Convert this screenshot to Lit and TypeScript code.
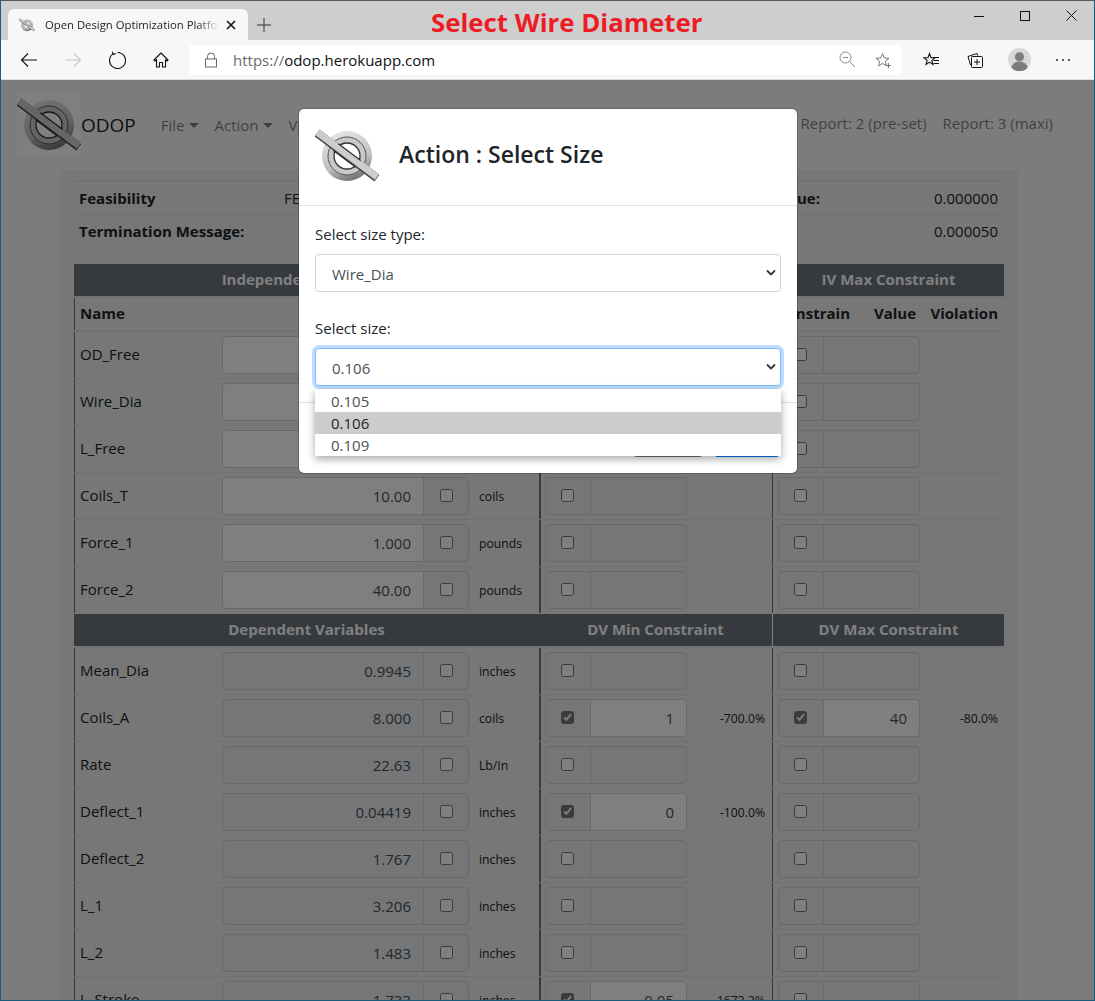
import { LitElement, html, css, svg, unsafeCSS } from "lit";
import { customElement } from "lit/decorators.js";

const FONT_STACK = unsafeCSS(`"Open Sans", "Noto Sans", sans-serif`);

interface Row {
  name: string;
  value?: string;
  unit?: string;
  min?: string;
  minViolation?: string;
  max?: string;
  maxViolation?: string;
}

const independent: Row[] = [
  { name: "OD_Free" },
  { name: "Wire_Dia" },
  { name: "L_Free" },
  { name: "Coils_T", value: "10.00", unit: "coils" },
  { name: "Force_1", value: "1.000", unit: "pounds" },
  { name: "Force_2", value: "40.00", unit: "pounds" },
];

const dependent: Row[] = [
  { name: "Mean_Dia", value: "0.9945", unit: "inches" },
  { name: "Coils_A", value: "8.000", unit: "coils", min: "1", minViolation: "-700.0%", max: "40", maxViolation: "-80.0%" },
  { name: "Rate", value: "22.63", unit: "Lb/In" },
  { name: "Deflect_1", value: "0.04419", unit: "inches", min: "0", minViolation: "-100.0%" },
  { name: "Deflect_2", value: "1.767", unit: "inches" },
  { name: "L_1", value: "3.206", unit: "inches" },
  { name: "L_2", value: "1.483", unit: "inches" },
  { name: "L_Stroke", value: "1.733", unit: "inches", min: "0.05", minViolation: "1673.3%" },
];

// the ODOP mark: ringed disc crossed by a long diagonal bar
const logo = (size: number) => html`
  <svg width=${size} height=${size} viewBox="0 0 64 64" aria-hidden="true">
    <defs>
      <linearGradient id="ring" x1="0.25" y1="0" x2="0.6" y2="1">
        <stop offset="0" stop-color="#e6e6e6" />
        <stop offset="0.65" stop-color="#c0c0c0" />
        <stop offset="1" stop-color="#707070" />
      </linearGradient>
    </defs>
    ${svg`
      <circle cx="32" cy="32" r="25" fill="url(#ring)" />
      <circle cx="32" cy="32" r="19" fill="#c8c8c8" stroke="#555" stroke-width="1" />
      <circle cx="32" cy="32" r="13" fill="#fff" stroke="#333" stroke-width="1.3" />
      <path d="M2 9 L62 54" stroke="#4a4a4a" stroke-width="8.5" />
      <path d="M2.600 8.400 L62 52.900" stroke="#cdcdcd" stroke-width="7" />
      <path d="M18.300 26.500 L40.700 43.300 M23.300 19.700 L45.700 36.500" stroke="#2c2c2c" stroke-width="1.1" />
    `}
  </svg>
`;

const chevron = html`
  <svg class="chevron" width="16" height="12" viewBox="0 0 16 12" aria-hidden="true">
    <path d="M4.500 4 8 7.500 11.500 4" fill="none" stroke="#343a40" stroke-width="1.800" stroke-linecap="round" stroke-linejoin="round" />
  </svg>
`;

@customElement("app-root")
export class AppRoot extends LitElement {
  static styles = css`
    :host {
      display: block;
    }

    * {
      box-sizing: border-box;
    }

    .window {
      display: flex;
      flex-direction: column;
      height: 1001px;
      overflow: hidden;
      background: #fff;
      border: 1px solid #1b5c78;
      border-top-color: #4d5a60;
      font-family: ${FONT_STACK};
      font-size: 15px;
      color: #212529;
    }

    /* browser chrome */
    .titlebar {
      display: flex;
      flex: none;
      height: 39px;
      background: #cecece;
      padding-left: 7px;
    }

    .tab {
      display: flex;
      align-items: center;
      width: 240px;
      margin-top: 8px;
      padding-left: 11px;
      background: #f7f7f7;
      border-radius: 6px 6px 0 0;
      font-size: 11.3px;
      white-space: nowrap;
    }

    .tab-title {
      width: 174px;
      margin-left: 10px;
      overflow: hidden;
      -webkit-mask-image: linear-gradient(90deg, #000 88%, transparent);
      mask-image: linear-gradient(90deg, #000 88%, transparent);
    }

    .tab-close {
      margin-left: 7px;
      display: flex;
    }

    .new-tab {
      display: flex;
      align-items: center;
      justify-content: center;
      width: 32px;
      padding-top: 9px;
    }

    .caption {
      margin-left: 151px;
      font-size: 25.8px;
      font-weight: 700;
      line-height: 42px;
      color: #ed1c24;
      white-space: nowrap;
    }

    .win-controls {
      display: flex;
      margin-left: auto;
    }

    .win-controls span {
      display: flex;
      align-items: center;
      justify-content: center;
      width: 46px;
      height: 29px;
    }

    .toolbar {
      display: flex;
      flex: none;
      align-items: center;
      height: 40px;
      padding-left: 6px;
      background: #f7f7f7;
      border-bottom: 1px solid #dedede;
    }

    .tool {
      display: flex;
      align-items: center;
      justify-content: center;
      flex: none;
      width: 44px;
      height: 30px;
    }

    .urlbar {
      display: flex;
      align-items: center;
      width: 713px;
      height: 30px;
      margin: 0 7px 0 6px;
      padding-left: 15px;
      background: #fff;
      border-radius: 4px;
      font-size: 15px;
    }

    .url {
      margin-left: 15px;
      color: #111;
    }

    .url span {
      color: #6b6b6b;
    }

    .url-end {
      display: flex;
      align-items: center;
      gap: 20px;
      margin-left: auto;
      padding-right: 11px;
    }

    .avatar {
      display: block;
    }

    /* application page, dimmed by the backdrop */
    .page {
      position: relative;
      flex: 1;
      min-height: 0;
      overflow: hidden;
      background: #f8f9fa;
    }

    .backdrop {
      position: absolute;
      inset: 0;
      background: rgba(0, 0, 0, 0.5);
    }

    .nav {
      display: flex;
      height: 90px;
      padding: 13px 0 0 16px;
    }

    .brand {
      display: flex;
      align-items: center;
      height: 64px;
      font-size: 19px;
      color: rgba(0, 0, 0, 0.9);
    }

    .brand svg {
      display: block;
      background: #fff;
    }

    .nav-links {
      display: flex;
      align-items: center;
      gap: 16px;
      height: 64px;
      margin-left: 25px;
      color: rgba(0, 0, 0, 0.5);
    }

    .caret {
      display: inline-block;
      margin-left: 4px;
      vertical-align: 3px;
      border-top: 5px solid currentColor;
      border-left: 5px solid transparent;
      border-right: 5px solid transparent;
    }

    .nav-right {
      display: flex;
      gap: 16px;
      margin-left: auto;
      padding: 0 41px 0 0;
      height: 60px;
      align-items: center;
      color: rgba(0, 0, 0, 0.5);
    }

    .container {
      width: 959px;
      margin-left: 59px;
      padding: 10px 15px 0 14px;
      background: #eeeeee;
      min-height: 840px;
    }

    .summary {
      border-top: 2px solid #dee2e6;
      margin-bottom: 16px;
    }

    .summary-row {
      display: flex;
      height: 33px;
      align-items: center;
      padding: 0 6px 2px 5px;
    }

    .summary-row + .summary-row {
      border-top: 1px solid #dee2e6;
    }

    .summary-row b:first-child {
      width: 205px;
    }

    .summary-row .right {
      margin-left: auto;
    }

    .summary-row .end {
      width: 178px;
      text-align: right;
    }

    .band {
      display: grid;
      grid-template-columns: 465px 233px 232px;
      height: 32px;
      background: #6c757d;
      color: #fff;
      font-weight: 700;
      line-height: 31px;
      text-align: center;
    }

    .band span:last-child {
      border-left: 1px solid #fff;
    }

    .dv-band {
      margin-top: 1px;
    }

    .grid-row {
      display: grid;
      grid-template-columns: 465px 233px 232px;
    }

    .sec {
      display: flex;
      align-items: center;
      padding: 4px 0;
      border-left: 1px solid #6c757d;
    }

    .sec.main {
      padding-left: 5px;
    }

    .sec.min {
      padding-left: 4px;
      border-left-width: 2px;
    }

    .sec.max {
      padding-left: 5px;
    }

    .heads {
      border-top: 2px solid #dee2e6;
      border-bottom: 2px solid #dee2e6;
      font-weight: 700;
    }

    .heads .sec {
      height: 32px;
      padding: 0 0 2px;
    }

    .heads .cols {
      display: grid;
      grid-template-columns: 77px 66px 82px;
      text-align: right;
      width: 100%;
    }

    .heads .sec.main {
      padding-left: 5px;
    }

    .body-row + .body-row {
      border-top: 1px solid #dee2e6;
    }

    .dv {
      margin-top: 1px;
      border-top: 1px solid #dee2e6;
    }

    .name {
      width: 142px;
      flex: none;
      padding-bottom: 2px;
    }

    .group {
      display: flex;
      flex: none;
      height: 38px;
    }

    .group.value {
      width: 247px;
    }

    .group.limit {
      width: 142px;
    }

    .field {
      flex: 1;
      padding-right: 12px;
      background: #e9ecef;
      border: 1px solid #ced4da;
      color: #495057;
      line-height: 36px;
      text-align: right;
    }

    .field.on {
      background: #fff;
    }

    .value .field {
      border-radius: 4px 0 0 4px;
    }

    .limit .field {
      border-radius: 0 4px 4px 0;
      margin-left: -1px;
    }

    .addon {
      display: flex;
      flex: none;
      align-items: center;
      justify-content: center;
      width: 46px;
      padding-bottom: 2px;
      background: #e9ecef;
      border: 1px solid #ced4da;
    }

    .value .addon {
      margin-left: -1px;
      border-radius: 0 4px 4px 0;
    }

    .limit .addon {
      width: 46px;
      padding-right: 1px;
      border-radius: 4px 0 0 4px;
    }

    .check {
      display: flex;
      align-items: center;
      justify-content: center;
      width: 13px;
      height: 13px;
      background: #fff;
      border: 1px solid #767676;
      border-radius: 2.5px;
    }

    .check.on {
      background: #767676;
    }

    .unit {
      margin-left: 10px;
      font-size: 12.2px;
    }

    .violation {
      flex: 1;
      padding-right: 7px;
      font-size: 12.2px;
      text-align: right;
    }

    .sec.max .violation {
      padding-right: 6px;
    }

    /* modal */
    .modal {
      position: absolute;
      top: 29px;
      left: 298px;
      width: 498px;
      background: #fff;
      border-radius: 5px;
      box-shadow: 0 0 0 1px rgba(0, 0, 0, 0.2);
    }

    .modal-head {
      display: flex;
      align-items: center;
      height: 97px;
      padding: 0 0 2px 16px;
      border-bottom: 1px solid #dee2e6;
    }

    .modal-head svg {
      display: block;
    }

    .modal-head h5 {
      margin: 0 0 2px 20px;
      font-size: 23px;
      font-weight: 600;
      line-height: 1.2;
    }

    .modal-body {
      display: flex;
      flex-direction: column;
      padding: 16px;
      border-bottom: 1px solid #dee2e6;
    }

    label {
      display: block;
      line-height: 24px;
      margin-bottom: 8px;
    }

    .select {
      position: relative;
      display: flex;
      align-items: center;
      justify-content: space-between;
      height: 38px;
      padding: 0 1px 0 16px;
      color: #495057;
      background: #fff;
      border: 1px solid #ced4da;
      border-radius: 4px;
      margin-bottom: 24px;
    }

    .select:last-child {
      margin-bottom: 0;
    }

    .select-text {
      padding-top: 2px;
    }

    .select.focus {
      border-color: #80bdff;
      box-shadow: 0 0 0 3px rgba(0, 123, 255, 0.25);
    }

    .options {
      position: absolute;
      top: 40px;
      left: -1px;
      right: -1px;
      z-index: 1;
      height: 67px;
      padding-top: 1px;
      overflow: hidden;
      background: #fff;
      box-shadow: 0 3px 8px rgba(0, 0, 0, 0.35);
      line-height: 22px;
    }

    .options div {
      height: 22px;
      padding-left: 16px;
    }

    .options .sel {
      background: #cccccc;
      color: #212529;
    }

    .modal-foot {
      display: flex;
      justify-content: flex-end;
      gap: 11px;
      padding: 16px 17px 16px 16px;
    }

    .btn {
      width: 70px;
      height: 38px;
      border-radius: 4px;
      color: #fff;
      line-height: 38px;
      text-align: center;
      background: #6c757d;
    }

    .btn.primary {
      width: 66px;
      background: #007bff;
    }
  `;

  private box(on: boolean) {
    return html`<span class="check ${on ? "on" : ""}">
      ${on
        ? html`<svg width="9" height="8" viewBox="0 0 9 8" aria-hidden="true">
            <path d="M1 4.400 3.400 6.800 8 1.200" fill="none" stroke="#fff" stroke-width="2" />
          </svg>`
        : ""}
    </span>`;
  }

  private limit(cls: string, value?: string, violation?: string) {
    const on = value !== undefined;
    return html`<div class="sec ${cls}">
      <div class="group limit">
        <span class="addon">${this.box(on)}</span>
        <span class="field ${on ? "on" : ""}">${value ?? ""}</span>
      </div>
      <span class="violation">${violation ?? ""}</span>
    </div>`;
  }

  private row(r: Row, editable: boolean) {
    return html`<div class="grid-row body-row">
      <div class="sec main">
        <span class="name">${r.name}</span>
        <div class="group value">
          <span class="field ${editable ? "on" : ""}">${r.value ?? ""}</span>
          <span class="addon">${this.box(false)}</span>
        </div>
        <span class="unit">${r.unit ?? ""}</span>
      </div>
      ${this.limit("min", r.min, r.minViolation)} ${this.limit("max", r.max, r.maxViolation)}
    </div>`;
  }

  private chrome() {
    return html`
      <div class="titlebar">
        <div class="tab">
          ${logo(16)}
          <span class="tab-title">Open Design Optimization Platform</span>
          <span class="tab-close">
            <svg width="10" height="10" viewBox="0 0 10 10" aria-hidden="true">
              <path d="M1 1l8 8M9 1l-8 8" stroke="#111" stroke-width="1.600" />
            </svg>
          </span>
        </div>
        <div class="new-tab">
          <svg width="14" height="14" viewBox="0 0 14 14" aria-hidden="true">
            <path d="M7 0v14M0 7h14" stroke="#333" stroke-width="1" />
          </svg>
        </div>
        <div class="caption">Select Wire Diameter</div>
        <div class="win-controls">
          <span>
            <svg width="10" height="10" viewBox="0 0 10 10" aria-hidden="true"><path d="M0 5.500h10" stroke="#111" /></svg>
          </span>
          <span>
            <svg width="10" height="10" viewBox="0 0 10 10" aria-hidden="true"><rect x=".5" y=".5" width="9" height="9" fill="none" stroke="#111" /></svg>
          </span>
          <span>
            <svg width="11" height="11" viewBox="0 0 11 11" aria-hidden="true"><path d="M.5.5l10 10M10.500.5l-10 10" stroke="#111" /></svg>
          </span>
        </div>
      </div>
      <div class="toolbar">
        <span class="tool">
          <svg width="18" height="16" viewBox="0 0 18 16" aria-hidden="true">
            <path d="M17 8H1.500M8 1.500 1.500 8 8 14.500" fill="none" stroke="#111" stroke-width="1.100" />
          </svg>
        </span>
        <span class="tool">
          <svg width="18" height="16" viewBox="0 0 18 16" aria-hidden="true">
            <path d="M1 8h15.500M10 1.500 16.500 8 10 14.500" fill="none" stroke="#c8c8c8" stroke-width="1.100" />
          </svg>
        </span>
        <span class="tool">
          <svg width="18" height="18" viewBox="0 0 18 18" aria-hidden="true">
            <path d="M5.500 2.600A8 8 0 1 0 9.500 1.500" fill="none" stroke="#111" stroke-width="1.100" />
            <path d="M5 .5v3h3" fill="none" stroke="#111" stroke-width="1.100" transform="rotate(-18 5 3)" />
          </svg>
        </span>
        <span class="tool">
          <svg width="16" height="16" viewBox="0 0 16 16" aria-hidden="true">
            <path d="M8 1 1 8l1 1 1.500-1.300V15h3v-4.500h3V15h3V7.700L14 9l1-1z" fill="none" stroke="#111" stroke-width="1.100" stroke-linejoin="round" />
          </svg>
        </span>
        <div class="urlbar">
          <svg width="14" height="16" viewBox="0 0 14 16" aria-hidden="true">
            <path d="M3.500 7V4.500a3.500 3.500 0 0 1 7 0V7" fill="none" stroke="#666" />
            <rect x="1.500" y="7" width="11" height="8" fill="none" stroke="#666" />
          </svg>
          <span class="url"><span>https://</span>odop.herokuapp.com</span>
          <span class="url-end">
            <svg width="16" height="17" viewBox="0 0 16 17" aria-hidden="true">
              <circle cx="6.500" cy="6.500" r="5.500" fill="none" stroke="#888" />
              <path d="M10.500 10.500 16 16M4 6.500h5" stroke="#888" />
            </svg>
            <svg width="16" height="16" viewBox="0 0 16 16" aria-hidden="true">
              <path d="M7.500 1.500 9.300 6l4.700.3-3.600 3 1.200 4.600-4.100-2.600-4 2.600 1.100-4.600-3.600-3L5.700 6z" fill="none" stroke="#777" />
              <path d="M11 13.500h5M13.500 11v5" stroke="#777" />
            </svg>
          </span>
        </div>
        <span class="tool">
          <svg width="16" height="16" viewBox="0 0 16 16" aria-hidden="true">
            <path d="M6.500 1.500 8 5.600l4 .2-3.100 2.600 1 4-3.400-2.300-3.400 2.300 1-4L1 5.800l4-.2z" fill="none" stroke="#111" stroke-width="1.100" />
            <path d="M10 5.500h6M10.500 8.500h5.500M10.500 11.500h5.500" stroke="#111" />
          </svg>
        </span>
        <span class="tool">
          <svg width="16" height="16" viewBox="0 0 16 16" aria-hidden="true">
            <path d="M3.500 13 1 4.500 10 1.500l.8 2" fill="none" stroke="#111" />
            <rect x="4.500" y="4.500" width="11" height="11" rx="1" fill="#f7f7f7" stroke="#111" />
            <path d="M10 7v6M7 10h6" stroke="#111" />
          </svg>
        </span>
        <span class="tool">
          <svg class="avatar" width="23" height="23" viewBox="0 0 23 23" aria-hidden="true">
            <circle cx="11.500" cy="11.500" r="11.500" fill="#d8d8d8" />
            <circle cx="11.500" cy="8.800" r="4.600" fill="#7c7c7c" />
            <path d="M3.500 20a8 6.500 0 0 1 16 0 11.500 11.500 0 0 1-16 0z" fill="#7c7c7c" />
          </svg>
        </span>
        <span class="tool">
          <svg width="16" height="4" viewBox="0 0 16 4" aria-hidden="true">
            <circle cx="2" cy="2" r="1" fill="#222" />
            <circle cx="8" cy="2" r="1" fill="#222" />
            <circle cx="14" cy="2" r="1" fill="#222" />
          </svg>
        </span>
      </div>
    `;
  }

  private modal() {
    return html`
      <div class="modal">
        <div class="modal-head">
          ${logo(64)}
          <h5>Action : Select Size</h5>
        </div>
        <div class="modal-body">
          <label>Select size type:</label>
          <div class="select"><span class="select-text">Wire_Dia</span> ${chevron}</div>
          <label>Select size:</label>
          <div class="select focus">
            <span class="select-text">0.106</span> ${chevron}
            <div class="options">
              <div>0.105</div>
              <div class="sel">0.106</div>
              <div>0.109</div>
            </div>
          </div>
        </div>
        <div class="modal-foot">
          <span class="btn">Cancel</span>
          <span class="btn primary">Select</span>
        </div>
      </div>
    `;
  }

  render() {
    return html`
      <div class="window">
        ${this.chrome()}
        <div class="page">
          <div class="nav">
            <div class="brand">${logo(64)}ODOP</div>
            <div class="nav-links">
              <span>File<i class="caret"></i></span>
              <span>Action<i class="caret"></i></span>
              <span>View<i class="caret"></i></span>
            </div>
            <div class="nav-right">
              <span>Report: 2 (pre-set)</span>
              <span>Report: 3 (maxi)</span>
            </div>
          </div>
          <div class="container">
            <div class="summary">
              <div class="summary-row">
                <b>Feasibility</b><span>FEASIBLE</span>
                <b class="right">Objective Value:</b><span class="end">0.000000</span>
              </div>
              <div class="summary-row">
                <b>Termination Message:</b>
                <span class="end right">0.000050</span>
              </div>
            </div>
            <div class="band">
              <span>Independent Variables</span>
              <span>IV Min Constraint</span>
              <span>IV Max Constraint</span>
            </div>
            <div class="grid-row heads">
              <div class="sec main">Name</div>
              <div class="sec min">
                <div class="cols"><span>Constrain</span><span>Value</span><span>Violation</span></div>
              </div>
              <div class="sec max">
                <div class="cols"><span>Constrain</span><span>Value</span><span>Violation</span></div>
              </div>
            </div>
            ${independent.map((r) => this.row(r, true))}
            <div class="band dv-band">
              <span>Dependent Variables</span>
              <span>DV Min Constraint</span>
              <span>DV Max Constraint</span>
            </div>
            <div class="dv">${dependent.map((r) => this.row(r, false))}</div>
          </div>
          <div class="backdrop"></div>
          ${this.modal()}
        </div>
      </div>
    `;
  }
}
